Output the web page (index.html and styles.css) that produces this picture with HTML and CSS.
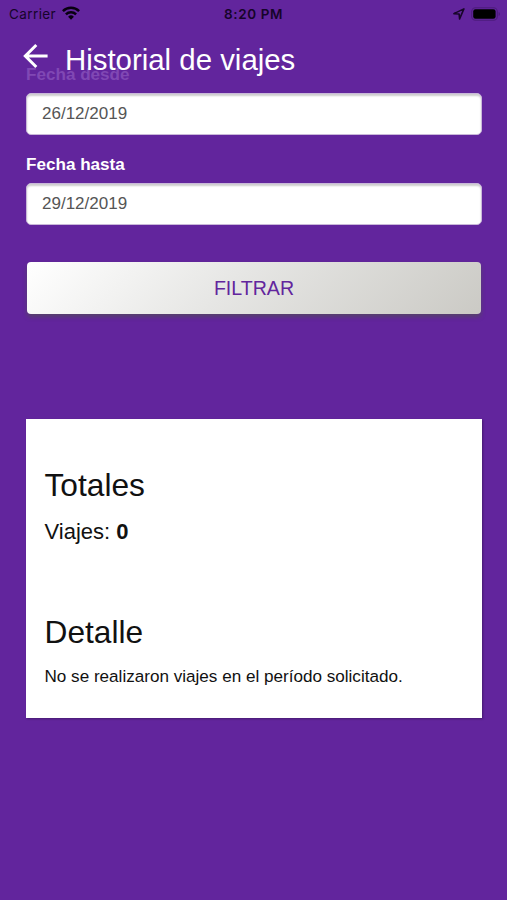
FILE: index.html
```
<!DOCTYPE html>
<html lang="es">
<head>
<meta charset="utf-8">
<title>Historial de viajes</title>
<link rel="stylesheet" href="styles.css">
</head>
<body>
<header class="header">
  <div class="status">
    <div class="status-left"><span class="carrier">Carrier</span>
      <svg class="wifi" width="18" height="14" viewBox="0 0 18 14" fill="none" stroke="#080010" stroke-width="2.5"><path d="M.9 5.1a11.6 11.6 0 0 1 16.2 0M3.9 8.3a7.3 7.3 0 0 1 10.2 0"/><path d="M9 13.8 6.1 10.7a4.1 4.1 0 0 1 5.800 0Z" fill="#080010" stroke="none"/></svg>
    </div>
    <span class="time">8:20 PM</span>
    <div class="status-right">
      <svg width="12" height="12" viewBox="0 0 12 12" fill="none" stroke="#180629" stroke-width="1.6" stroke-linejoin="round"><path d="M.9 5.6 10.9.9 6.6 10.9 6.1 6Z"/></svg>
      <svg class="battery" width="30" height="14" viewBox="0 0 30 14"><rect x=".7" y=".8" width="25.6" height="12.4" rx="3.8" fill="none" stroke="#4c1c7c" stroke-width="1.1"/><rect x="2.2" y="2.3" width="22.4" height="9.4" rx="2.3" fill="#000"/><path d="M27.6 5v4c1.8-.7 1.8-3.3 0-4Z" fill="#4c1c7c"/></svg>
    </div>
  </div>
  <div class="title-bar">
    <svg class="back" width="26" height="26" viewBox="0 0 26 26" fill="none" stroke="#fff" stroke-width="3"><path d="M13.3 2 2.300 13l11 11M2.600 13H24.600"/></svg>
    <h1>Historial de viajes</h1>
  </div>
</header>
<main class="content">
  <label class="label label-under" for="desde">Fecha desde</label>
  <input class="field" id="desde" type="text" value="26/12/2019">
  <label class="label" for="hasta">Fecha hasta</label>
  <input class="field" id="hasta" type="text" value="29/12/2019">
  <button class="filter" type="button">FILTRAR</button>
  <section class="card">
    <h2>Totales</h2>
    <p class="count">Viajes: <b>0</b></p>
    <h2 class="detail">Detalle</h2>
    <p class="message">No se realizaron viajes en el período solicitado.</p>
  </section>
</main>
</body>
</html>
```
FILE: styles.css
```
* { box-sizing: border-box; }
body {
  margin: 0;
  height: 900px;
  overflow: hidden;
  background: #62259d;
  font-family: "Liberation Sans", Arial, sans-serif;
}
h1, h2, p { margin: 0; font-weight: 400; }
svg { display: block; flex: none; }

/* Bar that floats over the scrolled form */
.header { position: absolute; top: 0; left: 0; width: 507px; z-index: 1; }
.status {
  display: grid;
  grid-template-columns: 1fr auto 1fr;
  align-items: center;
  height: 27px;
  padding: 0 6px 0 9px;
  font-family: Inter, sans-serif;
  font-size: 13.5px;
  color: #16042a;
}
.status-left, .status-right { display: flex; align-items: center; }
.status-left { gap: 6px; }
.carrier { letter-spacing: 0.4px; }
.wifi { margin-top: -2px; }
.time { margin-left: -3px; font-weight: 600; letter-spacing: 0.6px; }
.status-right { justify-content: flex-end; gap: 6px; }
.title-bar {
  display: flex;
  align-items: center;
  gap: 16px;
  height: 58px;
  padding: 0 0 0 23px;
}
.title-bar h1 { margin: 8px 0 0; font-size: 29.4px; line-height: 34px; color: #fff; white-space: nowrap; }

.content { display: flex; flex-direction: column; padding: 65px 25px 0 26px; }
.label { font-size: 17.1px; line-height: 20px; font-weight: 700; color: #fff; }
.label-under { color: #8048b4; }
.field {
  width: 100%;
  height: 42px;
  margin: 7.5px 0 20.5px;
  padding: 0 15px;
  border: 1px solid #c9b8d9;
  border-radius: 5px;
  background: #fff;
  box-shadow: inset 0 2px 2px rgba(0, 0, 0, 0.2);
  font: 17px "Liberation Sans", Arial, sans-serif;
  color: #555;
}
.filter {
  height: 52px;
  margin: 17px 1px 0;
  padding: 0;
  border: 0;
  border-radius: 4px;
  background: linear-gradient(135deg, #fff, #e6e6e4 45%, #cbcac5);
  box-shadow: 0 3px 4px rgba(80, 80, 80, 0.65);
  font: 19.6px "Liberation Sans", Arial, sans-serif;
  color: #62259d;
}
.card {
  height: 299px;
  margin-top: 104.500px;
  padding: 47.500px 18.500px 0;
  background: #fff;
  box-shadow: 1px 1px 2px rgba(0, 0, 0, 0.3);
  color: #111;
}
.card h2 { font-size: 31.7px; line-height: 38px; }
.count { margin-top: 15px; font-size: 22px; line-height: 26px; }
.card .detail { margin-top: 68px; }
.message { margin-top: 16px; font-size: 17.1px; line-height: 20px; white-space: nowrap; }
```
